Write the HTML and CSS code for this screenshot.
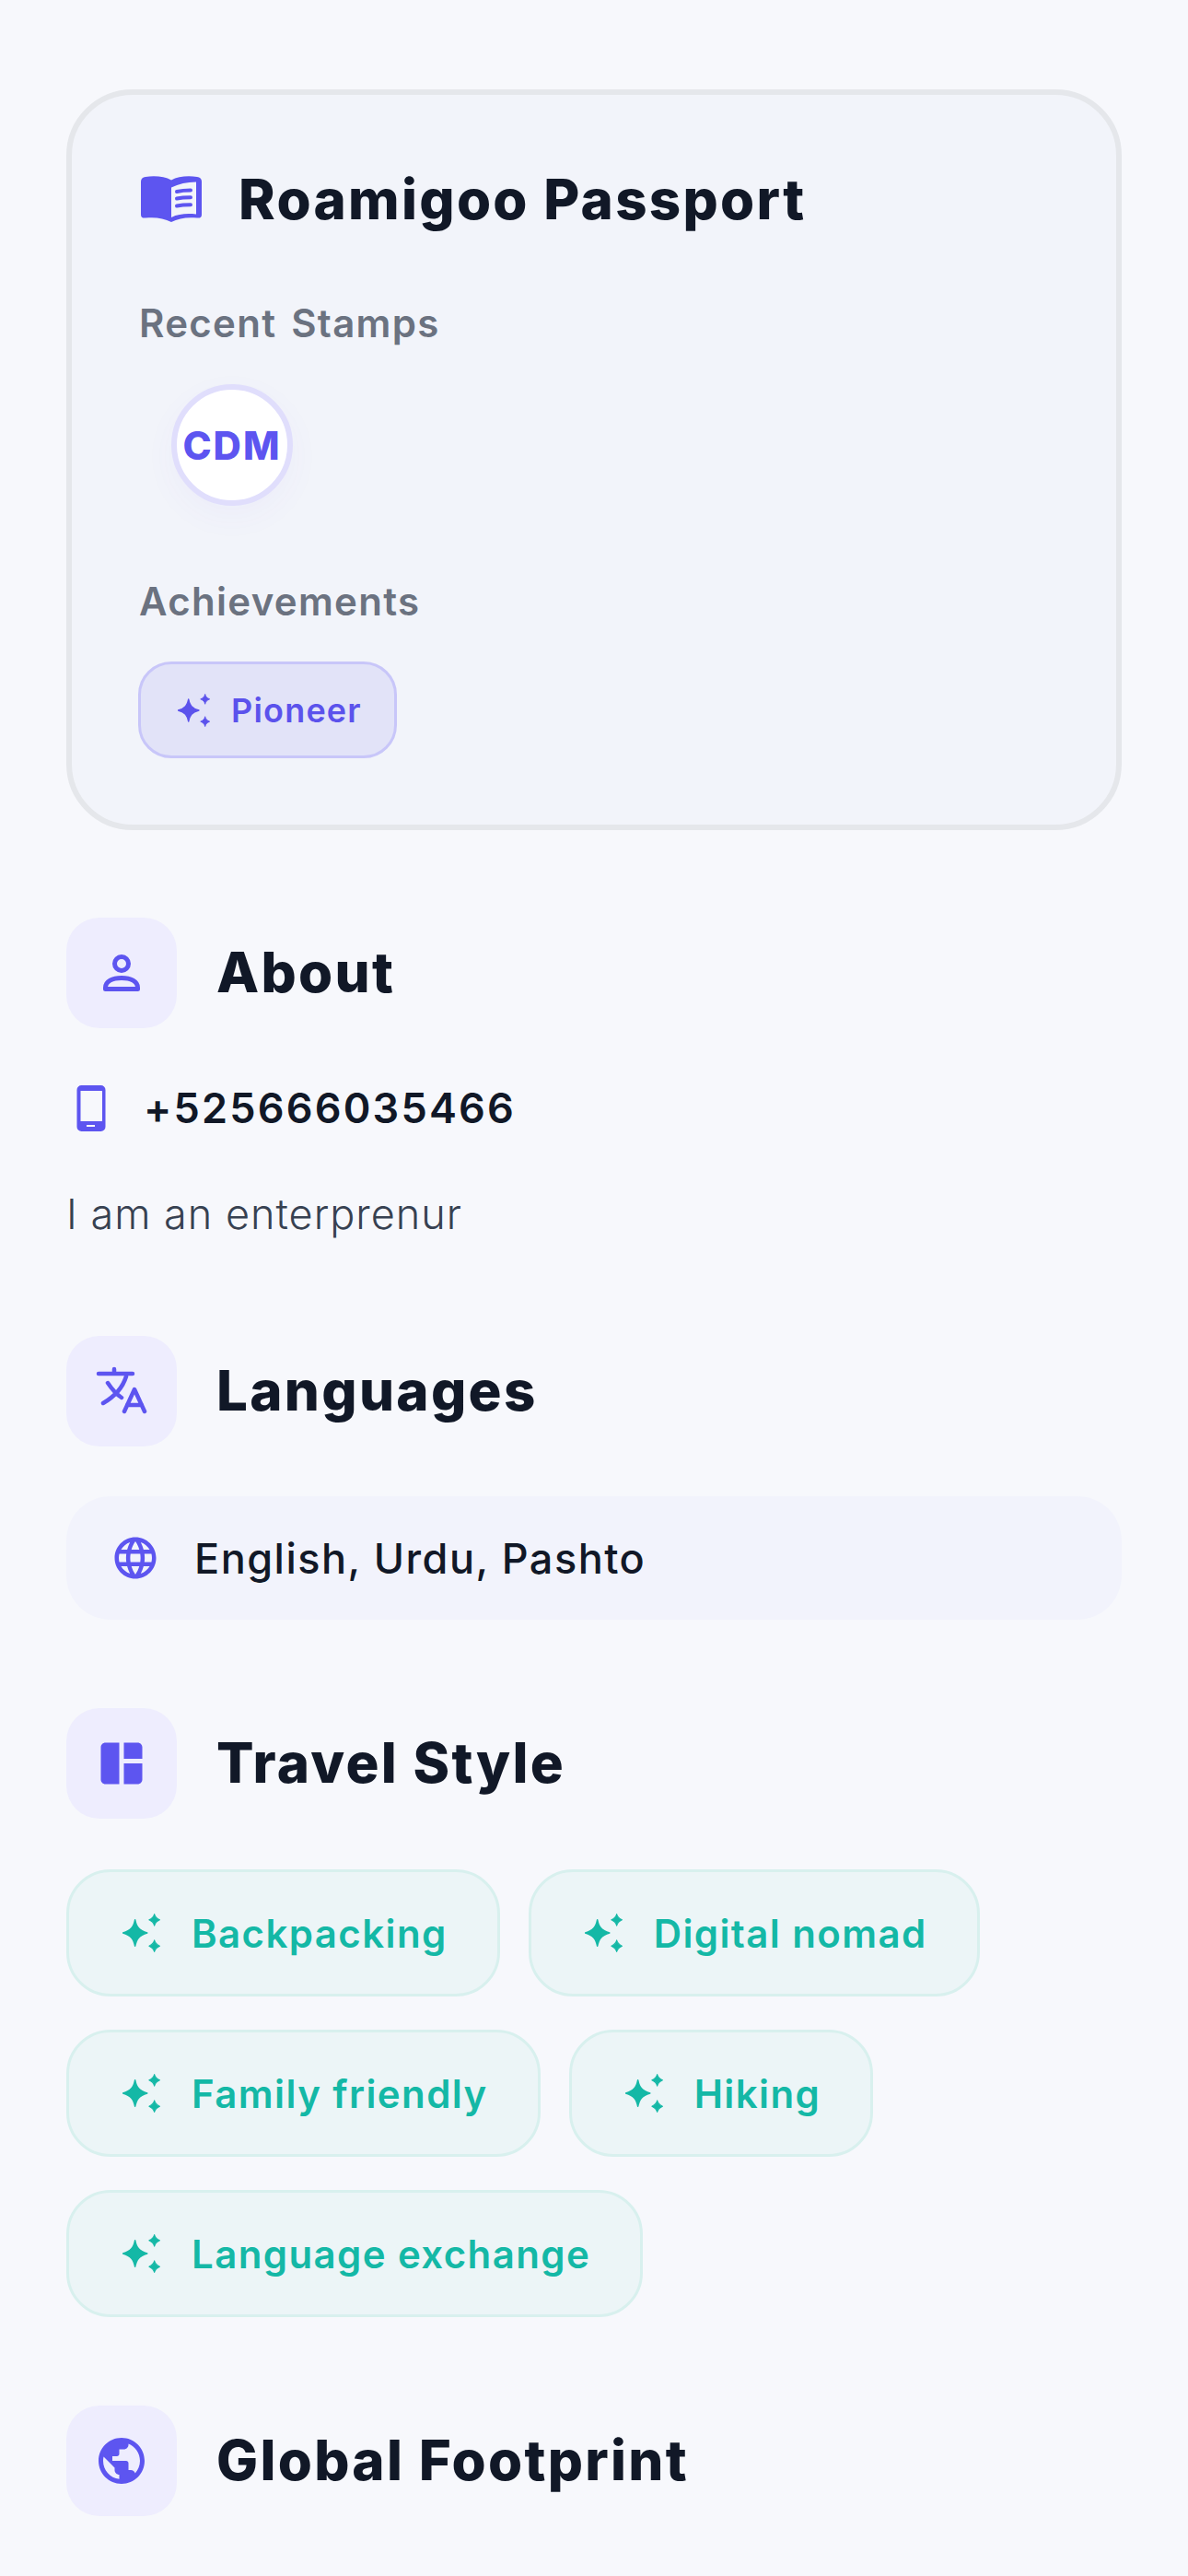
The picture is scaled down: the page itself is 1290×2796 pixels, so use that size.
FILE: index.html
```html
<!DOCTYPE html>
<html lang="en">
<head>
    <meta charset="UTF-8">
    <meta name="viewport" content="width=device-width, initial-scale=1.0">
    <title>Roamigoo Passport</title>
    <link rel="stylesheet" href="styles.css">
</head>
<body>
    <svg class="sprites" aria-hidden="true">
        <symbol id="sparkle" viewBox="0 0 40 40">
            <path d="M13 6.500C14.500 14 17 17.500 25.500 20 17 22.500 14.500 26 13 33.500 11.500 26 9 22.500.5 20 9 17.500 11.500 14 13 6.500z" stroke="currentColor" stroke-width="1.500" stroke-linejoin="round"/>
            <path d="M33 .5c.8 3.500 2.300 4.500 5.500 6-3.200 1.500-4.700 2.500-5.500 6-.8-3.500-2.300-4.500-5.500-6 3.200-1.500 4.700-2.500 5.500-6z" stroke="currentColor" stroke-width="1" stroke-linejoin="round"/>
            <path d="M33 27.500c.8 3.500 2.300 4.500 5.500 6-3.200 1.500-4.700 2.500-5.500 6-.8-3.500-2.300-4.500-5.500-6 3.200-1.500 4.700-2.500 5.500-6z" stroke="currentColor" stroke-width="1" stroke-linejoin="round"/>
        </symbol>
    </svg>

    <div class="passport">
        <div class="passport-title">
            <svg class="passport-icon" viewBox="0 0 66 50">
                <path fill-rule="evenodd" d="M0 6C0 3 2 1.500 5 1 15-.5 26 .5 33 4.500 40 .5 51-.5 61 1c3 .5 5 2 5 5v36c0 3-2 4-5 3.500-10-1-20 0-28 4.500-8-4.500-18-5.500-28-4.500-3 .5-5-.5-5-3.500zM33 12.500V45c8-4 17-4.500 27-3.500v-35C50 6.500 41 8.500 33 12.500z"/>
                <path d="M39 17c5-1.200 10-1.500 15-1.500M39 24.500c5-1 10-1.200 15-1.200M39 32.500c5-1 10-1.200 15-1.200" fill="none" stroke="#5d55f0" stroke-width="4" stroke-linecap="round"/>
            </svg>
            <h2>Roamigoo Passport</h2>
        </div>
        <h3 class="passport-label">Recent Stamps</h3>
        <div class="stamps">
            <div class="stamp">CDM</div>
        </div>
        <h3 class="passport-label">Achievements</h3>
        <div class="achievements">
            <span class="achievement"><svg class="sparkle"><use href="#sparkle"/></svg>Pioneer</span>
        </div>
    </div>

    <section class="section about">
        <div class="section-head">
            <div class="section-icon">
                <svg viewBox="0 0 24 24" fill="none" stroke="currentColor" stroke-width="2"><circle cx="12" cy="8" r="3"/><path d="M5 19v-.6c0-2.800 3-4.200 7-4.200s7 1.400 7 4.200v.6z" stroke-linejoin="round"/></svg>
            </div>
            <h2>About</h2>
        </div>
        <div class="phone">
            <svg class="phone-icon" viewBox="0 0 54 54"><path fill-rule="evenodd" d="M16.500 2h21a5 5 0 0 1 5 5v40a5 5 0 0 1-5 5h-21a5 5 0 0 1-5-5V7a5 5 0 0 1 5-5zm-1 6v33H39V8zM22 45v2h9v-2z"/></svg>
            <span>+525666035466</span>
        </div>
        <p class="bio">I am an enterprenur</p>
    </section>

    <section class="section languages">
        <div class="section-head">
            <div class="section-icon">
                <svg viewBox="0 0 60 60" fill="none" stroke="currentColor" stroke-width="4.500" stroke-linecap="round" stroke-linejoin="round"><path d="M5 11h37M22 6v5M35 14C31 27 22 36 10 43M15 21c4 6 9 12 15 16M33 52l11-24 11 24M36 45h16"/></svg>
            </div>
            <h2>Languages</h2>
        </div>
        <div class="language-row">
            <svg viewBox="0 0 24 24"><path d="M11.990 2C6.470 2 2 6.480 2 12s4.470 10 9.990 10C17.520 22 22 17.520 22 12S17.520 2 11.990 2zm6.930 6h-2.950c-.32-1.250-.78-2.450-1.380-3.560 1.840.63 3.370 1.910 4.330 3.560zM12 4.040c.83 1.200 1.480 2.530 1.910 3.960h-3.820c.43-1.430 1.080-2.760 1.910-3.960zM4.260 14C4.100 13.360 4 12.690 4 12s.1-1.360.26-2h3.380c-.08.66-.14 1.320-.14 2 0 .68.06 1.340.14 2H4.260zm.82 2h2.950c.32 1.250.78 2.450 1.380 3.560-1.840-.63-3.370-1.900-4.330-3.560zm2.950-8H5.080c.96-1.660 2.490-2.930 4.330-3.560C8.810 5.550 8.350 6.750 8.030 8zM12 19.960c-.83-1.200-1.480-2.530-1.910-3.960h3.820c-.43 1.430-1.080 2.760-1.910 3.960zM14.340 14H9.660c-.09-.66-.16-1.320-.16-2 0-.68.07-1.350.16-2h4.680c.09.65.16 1.320.16 2 0 .68-.07 1.340-.16 2zm.25 5.560c.6-1.110 1.060-2.310 1.380-3.560h2.950c-.96 1.650-2.490 2.930-4.330 3.560zM16.360 14c.08-.66.14-1.320.14-2 0-.68-.06-1.340-.14-2h3.380c.16.64.26 1.310.26 2s-.1 1.360-.26 2h-3.380z"/></svg>
            <span>English, Urdu, Pashto</span>
        </div>
    </section>

    <section class="section travel">
        <div class="section-head">
            <div class="section-icon">
                <svg viewBox="0 0 24 24"><path d="M11 21H5c-1.100 0-2-.9-2-2V5c0-1.100.9-2 2-2h6v18zm2 0h6c1.100 0 2-.9 2-2v-7h-8v9zm8-11V5c0-1.100-.9-2-2-2h-6v7h8z"/></svg>
            </div>
            <h2>Travel Style</h2>
        </div>
        <div class="chips">
            <span class="chip"><svg class="sparkle"><use href="#sparkle"/></svg>Backpacking</span>
            <span class="chip"><svg class="sparkle"><use href="#sparkle"/></svg>Digital nomad</span>
            <span class="chip"><svg class="sparkle"><use href="#sparkle"/></svg>Family friendly</span>
            <span class="chip"><svg class="sparkle"><use href="#sparkle"/></svg>Hiking</span>
            <span class="chip"><svg class="sparkle"><use href="#sparkle"/></svg>Language exchange</span>
        </div>
    </section>

    <section class="section footprint">
        <div class="section-head">
            <div class="section-icon">
                <svg viewBox="0 0 24 24"><path d="M12 2C6.480 2 2 6.480 2 12s4.480 10 10 10 10-4.480 10-10S17.520 2 12 2zm-1 17.930c-3.950-.49-7-3.850-7-7.930 0-.62.08-1.210.21-1.790L9 15v1c0 1.100.9 2 2 2v1.930zm6.900-2.540c-.26-.81-1-1.390-1.900-1.390h-1v-3c0-.55-.45-1-1-1H8v-2h2c.55 0 1-.45 1-1V7h2c1.100 0 2-.9 2-2v-.41c2.930 1.190 5 4.060 5 7.410 0 2.080-.8 3.970-2.100 5.390z"/></svg>
            </div>
            <h2>Global Footprint</h2>
        </div>
    </section>
</body>
</html>
```

FILE: styles.css
```css
* {
    box-sizing: border-box;
}
html, body {
    height: 2796px;
    overflow: hidden;
}
body {
    margin: 0;
    padding: 97px 72px 0;
    background: #f7f8fc;
    font-family: "Inter", "Liberation Sans", sans-serif;
    color: #111827;
}
.sprites {
    display: none;
}
h2, h3, p {
    margin: 0;
}

/* passport card */
.passport {
    border: 6px solid #e5e7eb;
    border-radius: 72px;
    padding: 72px;
    background: #f2f4fa;
    margin-bottom: 95px;
}
.passport-title {
    display: flex;
    align-items: center;
    gap: 40px;
    height: 82px;
    margin-bottom: 67px;
}
.passport-title h2 {
    font-size: 60px;
    font-weight: 800;
    letter-spacing: 2.300px;
}
.passport-icon {
    width: 66px;
    height: 50px;
    fill: #5d55f0;
    margin-left: 3px;
}
.passport-label {
    font-size: 42px;
    font-weight: 600;
    line-height: 54px;
    letter-spacing: 1.300px;
    word-spacing: 4px;
    color: #6b7280;
    padding-left: 1px;
}
.stamps {
    display: flex;
    padding: 39px 36px 36px;
    margin-bottom: 41px;
}
.stamp {
    width: 132px;
    height: 132px;
    border: 6px solid #e0defc;
    border-radius: 50%;
    background: #fff;
    box-shadow: 0 12px 36px rgba(93, 85, 240, 0.04);
    display: flex;
    align-items: center;
    justify-content: center;
    color: #5d55f0;
    font-size: 42px;
    font-weight: 800;
    letter-spacing: 2px;
}
.achievements {
    display: flex;
    margin-top: 38px;
}
.achievement {
    display: inline-flex;
    align-items: center;
    gap: 22px;
    height: 105px;
    padding: 0 35px 0 40px;
    border: 3px solid #c8c6f9;
    border-radius: 36px;
    background: #e2e3f8;
    color: #5b52ec;
    font-size: 36px;
    font-weight: 600;
    letter-spacing: 1.200px;
}
.sparkle {
    width: 36px;
    height: 36px;
    fill: currentColor;
    flex: none;
}

/* sections */
.section-head {
    display: flex;
    align-items: center;
    gap: 43px;
}
.section-head h2 {
    font-size: 60px;
    font-weight: 800;
    letter-spacing: 2.300px;
    padding-bottom: 3px;
}
.section-icon {
    width: 120px;
    height: 120px;
    border-radius: 36px;
    background: #eeedfe;
    display: flex;
    align-items: center;
    justify-content: center;
    color: #5d55f0;
}
.section-icon svg {
    width: 60px;
    height: 60px;
    fill: currentColor;
}
.section-icon svg[fill="none"] {
    fill: none;
}

.about {
    margin-bottom: 102px;
}
.phone {
    display: flex;
    align-items: center;
    gap: 30px;
    margin-top: 59px;
}
.phone-icon {
    width: 54px;
    height: 54px;
    fill: #5d55f0;
    flex: none;
}
.phone span {
    font-size: 45px;
    font-weight: 600;
    letter-spacing: 2.200px;
}
.bio {
    margin-top: 58px;
    font-size: 45px;
    line-height: 60px;
    letter-spacing: 1px;
    color: #374151;
    font-weight: 300;
}

.languages {
    margin-bottom: 96px;
}
.language-row {
    display: flex;
    align-items: center;
    gap: 37px;
    height: 134px;
    margin-top: 54px;
    padding: 0 48px;
    border-radius: 48px;
    background: #f2f3fc;
    font-size: 45px;
    font-weight: 500;
    letter-spacing: 1.500px;
}
.language-row svg {
    width: 54px;
    height: 54px;
    fill: #5d55f0;
    flex: none;
}

.travel {
    margin-bottom: 96px;
}
.chips {
    display: flex;
    flex-wrap: wrap;
    gap: 36px 31px;
    margin-top: 55px;
}
.chip {
    display: inline-flex;
    align-items: center;
    gap: 33px;
    height: 138px;
    padding: 0 54px 0 58px;
    border: 3px solid #d8f0ee;
    border-radius: 48px;
    background: #ecf5f7;
    color: #14b8a6;
    font-size: 42px;
    font-weight: 600;
    letter-spacing: 1.400px;
}
.chip .sparkle {
    width: 42px;
    height: 42px;
}
```
